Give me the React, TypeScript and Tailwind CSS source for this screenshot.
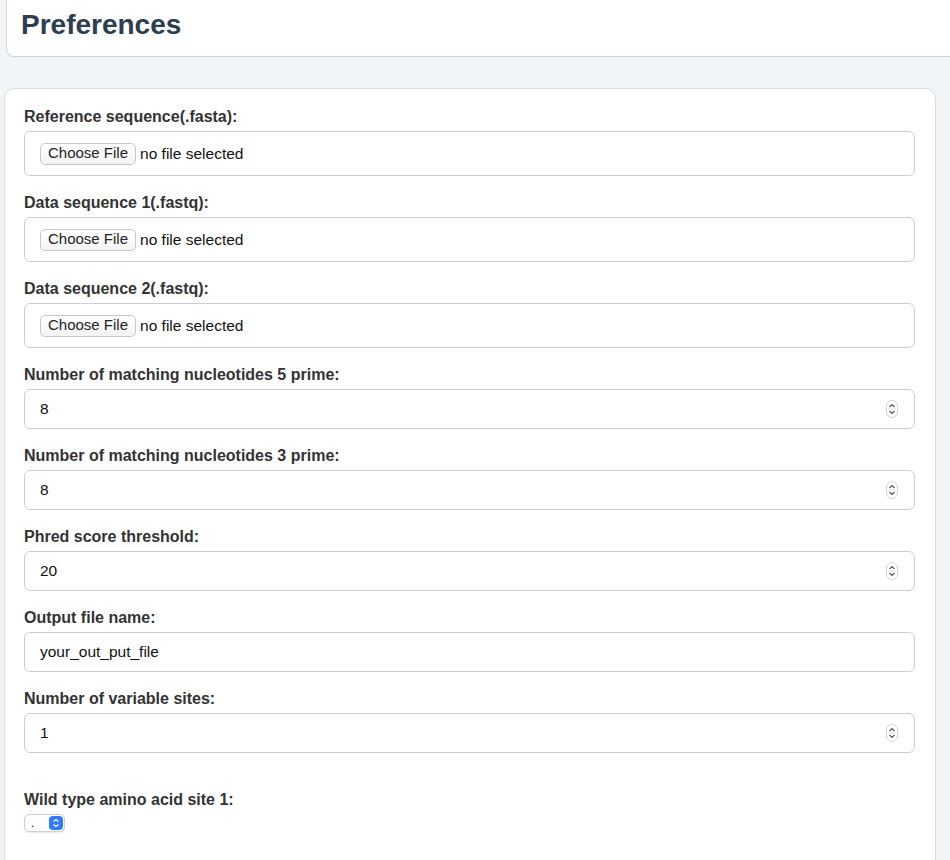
import React from "react";

function Spinner() {
  return (
    <div className="flex h-[18px] w-[12px] flex-col items-center justify-center rounded-full border border-[#d4d4d4] bg-white">
      <svg width="8" height="14" viewBox="0 0 8 14">
        <path d="M1.5 5 L4 2.5 L6.5 5" fill="none" stroke="#555" strokeWidth="1.2" />
        <line x1="0" y1="7" x2="8" y2="7" stroke="#e0e0e0" strokeWidth="1" />
        <path d="M1.5 9 L4 11.5 L6.5 9" fill="none" stroke="#555" strokeWidth="1.2" />
      </svg>
    </div>
  );
}

function Label({ children }: { children: React.ReactNode }) {
  return <div className="text-[16px] font-bold leading-[19px] text-[#333]">{children}</div>;
}

function FileField({ label }: { label: string }) {
  return (
    <div className="flex flex-col gap-[5px]">
      <Label>{label}</Label>
      <div className="flex h-[45px] items-center rounded-[6px] border border-[#ccd0d6] bg-white pl-[15px]">
        <div className="flex h-[22px] items-center rounded-[5px] border border-[#c8c8c8] bg-gradient-to-b from-white to-[#f4f4f4] px-[7px] text-[15px] text-[#222]">
          Choose File
        </div>
        <span className="ml-[4px] text-[15.5px] text-[#111]">no file selected</span>
      </div>
    </div>
  );
}

function InputField({ label, value, spin = true }: { label: string; value: string; spin?: boolean }) {
  return (
    <div className="flex flex-col gap-[5px]">
      <Label>{label}</Label>
      <div className="flex h-[40px] items-center justify-between rounded-[6px] border border-[#ccd0d6] bg-white pl-[15px] pr-[16px]">
        <span className="text-[15.5px] text-[#111]">{value}</span>
        {spin && <Spinner />}
      </div>
    </div>
  );
}

export default function App() {
  return (
    <div
      className="h-[860px] w-[950px] overflow-hidden bg-[#f2f5f8]"
      style={{ fontFamily: '"Liberation Sans", Arial, sans-serif' }}
    >
      <div className="ml-[6px] mr-[-20px] mt-[-10px] flex h-[67px] items-end rounded-b-[8px] border border-t-0 border-[#cfd3d8] bg-white pb-[15px] pl-[14px]">
        <h1 className="text-[28px] font-bold leading-[32px] text-[#2c3e50]">Preferences</h1>
      </div>
      <div className="ml-[4px] mt-[31px] w-[932px] rounded-[10px] border border-[#d8dce1] bg-white pb-[40px] pl-[19px] pr-[20px] pt-[18px]">
        <div className="flex flex-col gap-[17px]">
          <FileField label="Reference sequence(.fasta):" />
          <FileField label="Data sequence 1(.fastq):" />
          <FileField label="Data sequence 2(.fastq):" />
          <InputField label="Number of matching nucleotides 5 prime:" value="8" />
          <InputField label="Number of matching nucleotides 3 prime:" value="8" />
          <InputField label="Phred score threshold:" value="20" />
          <InputField label="Output file name:" value="your_out_put_file" spin={false} />
          <InputField label="Number of variable sites:" value="1" />
        </div>
        <div className="mt-[37px] flex flex-col gap-[5px]">
          <Label>Wild type amino acid site 1:</Label>
          <div className="flex h-[18px] w-[41px] items-center justify-between rounded-[5px] border border-[#d0d0d0] bg-white pl-[6px] pr-[1px] shadow-[0_1px_1px_rgba(0,0,0,0.08)]">
            <span className="text-[12px] leading-none text-[#111]">.</span>
            <div className="flex h-[14px] w-[14px] items-center justify-center rounded-[4px] bg-[#2f7cf6]">
              <svg width="8" height="10" viewBox="0 0 8 10">
                <path d="M1.5 3.5 L4 1.5 L6.5 3.5" fill="none" stroke="white" strokeWidth="1.3" />
                <path d="M1.5 6.5 L4 8.5 L6.5 6.5" fill="none" stroke="white" strokeWidth="1.3" />
              </svg>
            </div>
          </div>
        </div>
      </div>
    </div>
  );
}
